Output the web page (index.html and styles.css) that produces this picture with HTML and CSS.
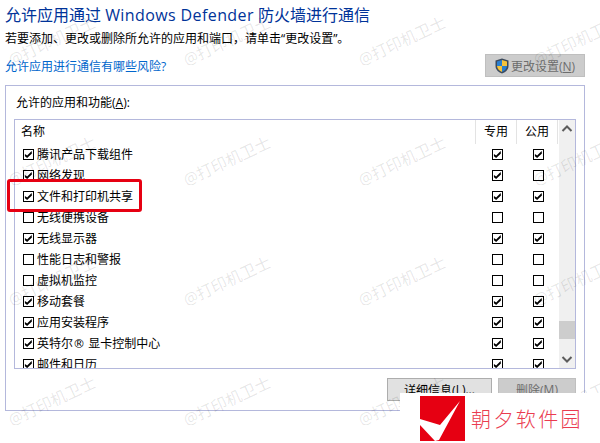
FILE: index.html
```html
<!DOCTYPE html>
<html lang="zh-CN">
<head>
  <meta charset="UTF-8">
  <title>允许的应用</title>
  <link rel="stylesheet" href="styles.css">
</head>
<body>
  <div class="page">
    <h1 class="title">允许应用通过 <span class="title-latin">Windows Defender</span> 防火墙进行通信</h1>
    <p class="desc">若要添加、更改或删除所允许的应用和端口，请单击“更改设置”。</p>

    <div class="link-row">
      <a class="risk-link">允许应用进行通信有哪些风险?</a>
      <div class="btn btn-settings">
        <svg class="shield" width="14" height="16" viewBox="0 0 14 16">
          <path d="M7 .5 L13.5 2.5 V8 C13.5 12 10 14.5 7 15.5 C4 14.5 .5 12 .5 8 V2.5 Z" fill="#3d4a5c"/>
          <path d="M7 2 L2 3.4 V8 H7 Z" fill="#2a7fd0"/>
          <path d="M7 2 L12 3.4 V8 H7 Z" fill="#f5c33b"/>
          <path d="M2 8 H7 V14 C4.5 13 2.2 11 2 8 Z" fill="#f5c33b"/>
          <path d="M12 8 H7 V14 C9.5 13 11.8 11 12 8 Z" fill="#2a7fd0"/>
        </svg>
        <span>更改设置(<u>N</u>)</span>
      </div>
    </div>

    <section class="group">
      <div class="group-label">允许的应用和功能(<u>A</u>):</div>
      <div class="list">
        <div class="list-main">
          <div class="list-head">
            <div class="head-name">名称</div>
            <div class="head-col">专用</div>
            <div class="head-col">公用</div>
          </div>
          <div class="row"><span class="name"><i class="cb on"></i><span class="label">腾讯产品下载组件</span></span><span class="cell"><i class="cb on"></i></span><span class="cell"><i class="cb on"></i></span></div>
          <div class="row"><span class="name"><i class="cb on"></i><span class="label">网络发现</span></span><span class="cell"><i class="cb on"></i></span><span class="cell"><i class="cb"></i></span></div>
          <div class="row"><span class="name"><i class="cb on"></i><span class="label">文件和打印机共享</span></span><span class="cell"><i class="cb on"></i></span><span class="cell"><i class="cb on"></i></span></div>
          <div class="row"><span class="name"><i class="cb"></i><span class="label">无线便携设备</span></span><span class="cell"><i class="cb"></i></span><span class="cell"><i class="cb"></i></span></div>
          <div class="row"><span class="name"><i class="cb on"></i><span class="label">无线显示器</span></span><span class="cell"><i class="cb on"></i></span><span class="cell"><i class="cb on"></i></span></div>
          <div class="row"><span class="name"><i class="cb"></i><span class="label">性能日志和警报</span></span><span class="cell"><i class="cb"></i></span><span class="cell"><i class="cb"></i></span></div>
          <div class="row"><span class="name"><i class="cb"></i><span class="label">虚拟机监控</span></span><span class="cell"><i class="cb"></i></span><span class="cell"><i class="cb"></i></span></div>
          <div class="row"><span class="name"><i class="cb on"></i><span class="label">移动套餐</span></span><span class="cell"><i class="cb on"></i></span><span class="cell"><i class="cb on"></i></span></div>
          <div class="row"><span class="name"><i class="cb on"></i><span class="label">应用安装程序</span></span><span class="cell"><i class="cb on"></i></span><span class="cell"><i class="cb on"></i></span></div>
          <div class="row"><span class="name"><i class="cb on"></i><span class="label">英特尔<span class="reg">®</span> 显卡控制中心</span></span><span class="cell"><i class="cb on"></i></span><span class="cell"><i class="cb on"></i></span></div>
          <div class="row"><span class="name"><i class="cb on"></i><span class="label">邮件和日历</span></span><span class="cell"><i class="cb on"></i></span><span class="cell"><i class="cb on"></i></span></div>
        </div>
        <div class="scrollbar">
          <svg width="16" height="10" viewBox="0 0 16 10"><path d="M3.5 7 L8 2.5 L12.5 7" fill="none" stroke="#5c5c5c" stroke-width="2"/></svg>
          <div class="thumb"></div>
          <svg width="16" height="10" viewBox="0 0 16 10"><path d="M3.5 3 L8 7.5 L12.5 3" fill="none" stroke="#5c5c5c" stroke-width="2"/></svg>
        </div>
      </div>
      <div class="group-actions">
        <div class="btn btn-details">详细信息(<u>L</u>)...</div>
        <div class="btn btn-delete">删除(<u>M</u>)</div>
      </div>
    </section>
  </div>

  <!-- 水印 -->
  <div class="watermarks">
    <div class="watermark-grid">
      <span>@打印机卫士</span><span>@打印机卫士</span><span>@打印机卫士</span><span>@打印机卫士</span>
      <span>@打印机卫士</span><span>@打印机卫士</span><span>@打印机卫士</span><span>@打印机卫士</span>
      <span>@打印机卫士</span><span>@打印机卫士</span><span>@打印机卫士</span><span>@打印机卫士</span>
      <span>@打印机卫士</span><span>@打印机卫士</span><span>@打印机卫士</span><span>@打印机卫士</span>
    </div>
  </div>

  <!-- 红框标注 -->
  <div class="highlight"></div>

  <!-- 右下角站标 -->
  <div class="brand">
    <svg class="brand-mark" width="45" height="45" viewBox="0 0 45 45">
      <rect width="45" height="45" fill="#e60012"/>
      <path d="M0 23 L20 29 L40 5 L19 44 L15 45 L0 29 Z" fill="#fff"/>
    </svg>
    <span class="brand-name">朝夕软件园</span>
  </div>
</body>
</html>
```

FILE: styles.css
```css
html, body {
  margin: 0;
  height: 100%;
}
body {
  position: relative;
  width: 600px;
  height: 443px;
  overflow: hidden;
  background: #fff;
  color: #000;
  font-family: "Open Sans", "Noto Sans CJK SC", sans-serif;
  font-size: 12px;
}
.page {
  padding: 4px 15px 0 5px;
}
.title {
  margin: 0;
  font-size: 16px;
  font-weight: 400;
  line-height: 22px;
  color: #003399;
}
.title-latin {
  letter-spacing: 0.4px;
}
.desc {
  margin: 0;
  padding-top: 4px;
  line-height: 18px;
}
.link-row {
  display: flex;
  justify-content: space-between;
  align-items: flex-start;
  padding-top: 6px;
}
.risk-link {
  color: #0066cc;
  line-height: 18px;
  margin-top: 4px;
}
.btn {
  box-sizing: border-box;
  display: flex;
  align-items: center;
  justify-content: center;
  height: 23px;
  border: 1px solid #adadad;
  background: #e1e1e1;
}
.btn-settings {
  width: 100px;
  gap: 2px;
  background: #cccccc;
  border-color: #bfbfbf;
  color: #6d6d6d;
}
.group {
  box-sizing: border-box;
  width: 580px;
  height: 326px;
  margin-top: 8px;
  padding: 8px 8px 0 8px;
  border: 1px solid #b4b8dc;
}
.group-label {
  line-height: 18px;
  padding: 0 0 0 2px;
}
.list {
  box-sizing: border-box;
  display: flex;
  height: 250px;
  margin-top: 7px;
  overflow: hidden;
  border: 1px solid #b4b8dc;
}
.list-main {
  flex: 1;
  min-width: 0;
}
.list-head {
  display: flex;
  height: 24px;
  line-height: 23px;
  padding-right: 1px;
}
.head-name {
  flex: 1;
  padding-left: 6px;
}
.head-col {
  box-sizing: border-box;
  width: 41px;
  text-align: center;
  border-left: 1px solid #e3e3e3;
}
.list-head .head-col:last-child {
  width: 42px;
  border-right: 1px solid #e3e3e3;
}
.row {
  display: flex;
  align-items: center;
  height: 21px;
}
.name {
  flex: 1;
  display: flex;
  align-items: center;
  gap: 3px;
  padding-left: 8px;
}
.label {
  margin-top: -2px;
}
.reg {
  font-family: "DejaVu Sans", sans-serif;
}
.cell {
  width: 41px;
  display: flex;
  justify-content: center;
}
.cb {
  box-sizing: border-box;
  position: relative;
  display: block;
  flex: none;
  width: 11px;
  height: 11px;
  border: 1px solid #000;
}
.cb.on::after {
  content: "";
  position: absolute;
  inset: 0;
  background: #000;
  clip-path: polygon(10% 45%, 35% 60%, 85% 10%, 88% 38%, 35% 90%, 10% 70%);
}
.scrollbar {
  width: 16px;
  flex: none;
  position: relative;
  background: #f0f0f0;
  display: flex;
  flex-direction: column;
  justify-content: space-between;
  padding: 4px 0;
  box-sizing: border-box;
}
.thumb {
  position: absolute;
  left: 0;
  right: 0;
  top: 201px;
  height: 18px;
  background: #cdcdcd;
}
.group-actions {
  display: flex;
  justify-content: flex-end;
  gap: 6px;
  margin-top: 9px;
}
.btn-details {
  width: 105px;
}
.btn-delete {
  width: 78px;
  background: #cccccc;
  border-color: #bfbfbf;
  color: #6d6d6d;
}
.watermarks {
  position: absolute;
  inset: 0;
  overflow: hidden;
  pointer-events: none;
}
.watermark-grid {
  display: grid;
  grid-template-columns: repeat(4, 175px);
  grid-auto-rows: 120px;
  margin: -20px 0 0 -36px;
}
.watermark-grid span {
  display: flex;
  align-items: center;
  justify-content: center;
  font-size: 16px;
  white-space: nowrap;
  color: rgba(0, 0, 0, 0.1);
  transform: rotate(-25deg);
}
.highlight {
  box-sizing: border-box;
  position: absolute;
  left: 7px;
  top: 179px;
  width: 135px;
  height: 33px;
  border: 3px solid #e60012;
  border-radius: 3px;
}
.brand {
  position: absolute;
  left: 400px;
  top: 393px;
  width: 200px;
  height: 50px;
  background: #fff;
  display: flex;
  align-items: center;
  gap: 6px;
  padding-left: 20px;
  box-sizing: border-box;
}
.brand-name {
  font-size: 20px;
  font-weight: 300;
  letter-spacing: 2.4px;
  color: #ea3c50;
}
```
